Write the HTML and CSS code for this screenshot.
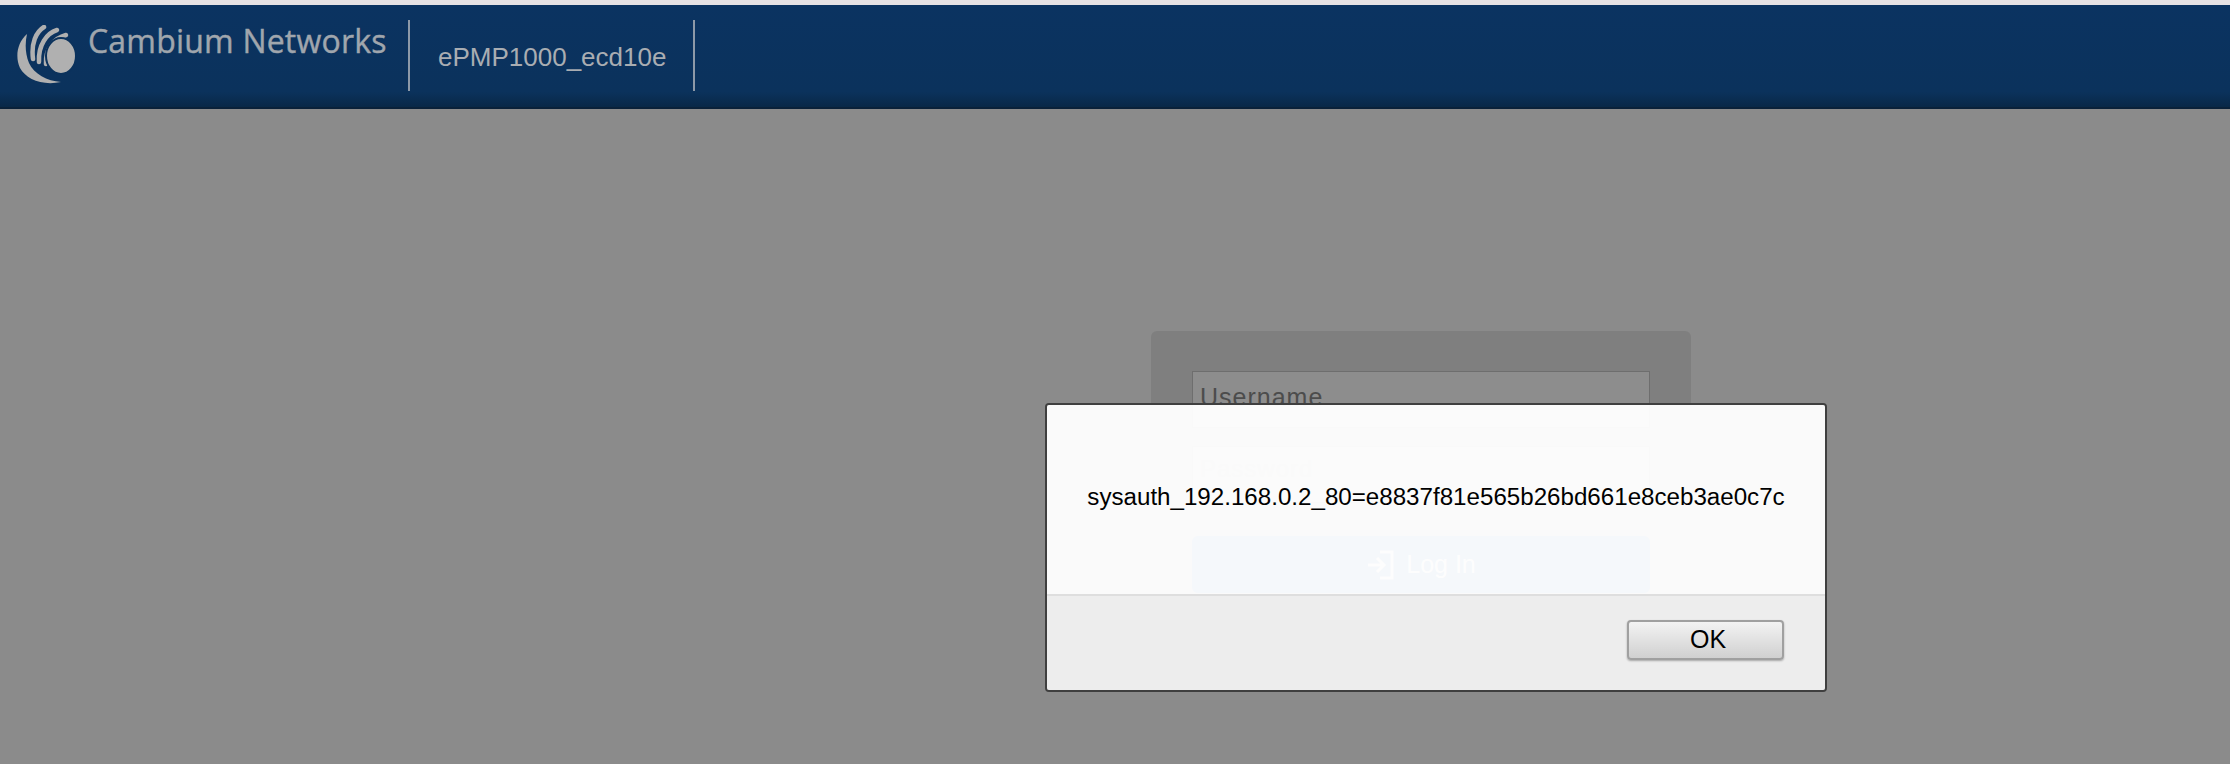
FILE: index.html
```html
<!DOCTYPE html>
<html lang="en">
<head>
  <meta charset="UTF-8" />
  <title>ePMP1000_ecd10e</title>
  <link rel="stylesheet" href="styles.css">
</head>
<body>
  <div class="top-strip"></div>

  <!-- Header bar -->
  <header class="header">
    <div class="brand">
      <svg class="logo" width="60" height="60" viewBox="16 24 60 60">
        <path class="logo-fill" d="M27 33C17 42 15 56 20 67C26 78 42 85 61 81C47 80 34 73 29 62C25 52 25 42 27 33Z"/>
        <path class="logo-arc" d="M44 26C36 31 31 42 33 58"/>
        <path class="logo-arc" d="M57 29C47 32 38 44 39 61"/>
        <path class="logo-arc" d="M66 34C55 37 45 47 46 63"/>
        <ellipse class="logo-disc" cx="61" cy="55" rx="15" ry="18"/>
      </svg>
      <span class="brand-name">Cambium Networks</span>
    </div>
    <div class="device-name">ePMP1000_ecd10e</div>
  </header>

  <!-- Login form behind the alert -->
  <main class="main">
    <form class="login-card">
      <div class="field">Username</div>
      <div class="field field-password">Password</div>
      <div class="login-btn">
        <svg width="30" height="34" viewBox="0 0 30 34">
          <path class="login-icon" d="M14 4H26V30H14M2 17H17M11 10L18 17L11 24"/>
        </svg>
        <span>Log In</span>
      </div>
    </form>
  </main>

  <!-- Alert dialog -->
  <div class="alert">
    <div class="alert-body">sysauth_192.168.0.2_80=e8837f81e565b26bd661e8ceb3ae0c7c</div>
    <div class="alert-footer">
      <button class="ok-btn">OK</button>
    </div>
  </div>
</body>
</html>
```

FILE: styles.css
```css
html, body {
  margin: 0;
  padding: 0;
  height: 764px;
  overflow: hidden;
}
body {
  font-family: "Liberation Sans", Arial, sans-serif;
  background: #8b8b8b;
  position: relative;
}
.top-strip {
  height: 5px;
  background: #e6e2e4;
}
.header {
  height: 104px;
  box-sizing: border-box;
  display: flex;
  align-items: center;
  background: linear-gradient(#0b3361, #0b325c 85%, #092847);
  border-bottom: 2px solid #0a2139;
}
.brand {
  width: 410px;
  height: 71px;
  margin-top: -2px;
  box-sizing: border-box;
  display: flex;
  align-items: flex-start;
  border-right: 2px solid #8d99a8;
}
.logo {
  margin: 5px 0 0 16px;
}
.logo-fill {
  fill: #b0b0b0;
}
.logo-arc {
  fill: none;
  stroke: #b0b0b0;
  stroke-width: 4.5;
  stroke-linecap: round;
}
.logo-disc {
  fill: #b0b0b0;
  stroke: #0b325c;
  stroke-width: 2;
}
.brand-name {
  margin: -1px 0 0 12px;
  font-family: "Open Sans", sans-serif;
  font-size: 32px;
  letter-spacing: 0.2px;
  -webkit-text-stroke: 0.4px #a0a6ad;
  color: #a0a6ad;
  white-space: nowrap;
}
.device-name {
  width: 285px;
  height: 71px;
  margin-top: -2px;
  box-sizing: border-box;
  padding: 22px 0 0 28px;
  font-size: 26px;
  color: #a9adb2;
  border-right: 2px solid #8d99a8;
}
.main {
  padding: 222px 0 0 1151px;
}
.login-card {
  width: 540px;
  height: 290px;
  box-sizing: border-box;
  padding: 40px 41px;
  background: #7f7f7f;
  border-radius: 6px;
}
.field {
  height: 57px;
  margin-bottom: 18px;
  box-sizing: border-box;
  padding: 13px 7px;
  font-size: 25px;
  line-height: 24px;
  letter-spacing: 1px;
  color: #4c4c4c;
  background: #8d8d8d;
  border: 1px solid #6e6e6e;
}
.field-password {
  margin-bottom: 33px;
  padding-top: 10px;
  font-size: 24px;
  color: #777;
}
.login-btn {
  height: 57px;
  display: flex;
  align-items: center;
  justify-content: center;
  gap: 10px;
  font-size: 25px;
  color: #ccc;
  background: #004a94;
  border-radius: 6px;
}
.login-icon {
  fill: none;
  stroke: #ccc;
  stroke-width: 3;
}
.alert {
  position: absolute;
  left: 1045px;
  top: 403px;
  width: 782px;
  height: 289px;
  box-sizing: border-box;
  display: flex;
  flex-direction: column;
  border: 2px solid #3f3f3f;
  border-radius: 4px;
  overflow: hidden;
}
.alert-body {
  height: 191px;
  box-sizing: border-box;
  padding-top: 81px;
  text-align: center;
  font-size: 24.15px;
  line-height: 22px;
  color: #000;
  background: rgba(255, 255, 255, 0.96);
  border-bottom: 2px solid #dedede;
}
.alert-footer {
  flex: 1;
  display: flex;
  justify-content: flex-end;
  padding: 24px 41px 0 0;
  background: #ededed;
}
.ok-btn {
  width: 157px;
  height: 40px;
  padding: 0 0 2px 5px;
  font-family: "Liberation Sans", Arial, sans-serif;
  font-size: 25px;
  color: #000;
  background: linear-gradient(#f3f3f3, #d0d0d0);
  border: 2px solid #a0a0a0;
  border-radius: 4px;
  box-shadow: 0 1px 2px rgba(0,0,0,0.3);
}
```
